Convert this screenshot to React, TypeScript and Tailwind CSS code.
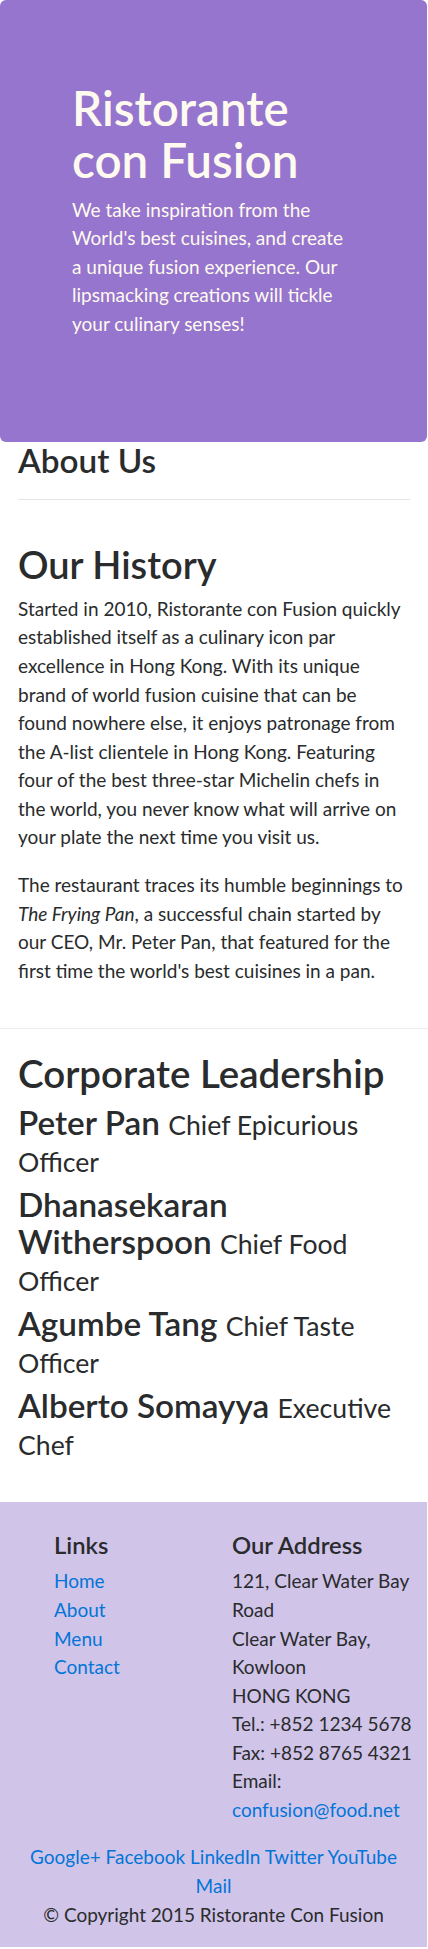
import React from 'react';

interface Leader {
  name: string;
  title: string;
}

const leaders: Leader[] = [
  { name: 'Peter Pan', title: 'Chief Epicurious Officer' },
  { name: 'Dhanasekaran Witherspoon', title: 'Chief Food Officer' },
  { name: 'Agumbe Tang', title: 'Chief Taste Officer' },
  { name: 'Alberto Somayya', title: 'Executive Chef' },
];

const navLinks = ['Home', 'About', 'Menu', 'Contact'];
const socials = ['Google+', 'Facebook', 'LinkedIn', 'Twitter', 'YouTube', 'Mail'];

const App = () => {
  return (
    <div className="w-[428px] bg-white text-[#292b2c] font-['Lato',sans-serif] text-[19px] leading-[28.56px]">
      {/* jumbotron */}
      <header className="w-[427px] h-[442px] rounded-[6px] bg-[#9575cd] px-[72px] pt-[82px]">
        <h1 className="text-[47.6px] leading-[1.1] font-semibold text-[#fffaf0] mb-[9px]">
          Ristorante con Fusion
        </h1>
        <p className="text-[#fffaf0]">
          We take inspiration from the World's best cuisines, and create a unique fusion experience. Our
          lipsmacking creations will tickle your culinary senses!
        </p>
      </header>

      {/* about / history */}
      <section className="px-[18px]">
        <h3 className="text-[33.3px] leading-[1.1] font-semibold">About Us</h3>
        <hr className="mt-[20px] border-0 border-t border-[#e5e5e5]" />
      </section>

      <section className="px-[18px] pt-[44px] pb-[24px] border-b border-[#ececec]">
        <h2 className="text-[38px] leading-[1.1] font-semibold mb-[9.5px]">Our History</h2>
        <p className="mb-[19px]">
          Started in 2010, Ristorante con Fusion quickly established itself as a culinary icon par
          excellence in Hong Kong. With its unique brand of world fusion cuisine that can be found
          nowhere else, it enjoys patronage from the A-list clientele in Hong Kong. Featuring four of
          the best three-star Michelin chefs in the world, you never know what will arrive on your plate
          the next time you visit us.
        </p>
        <p className="mb-[19px]">
          The restaurant traces its humble beginnings to <em>The Frying Pan</em>, a successful chain
          started by our CEO, Mr. Peter Pan, that featured for the first time the world's best cuisines
          in a pan.
        </p>
      </section>

      <section className="px-[18px] pt-[23px] pb-[32px]">
        <h2 className="text-[38.5px] leading-[1.1] font-semibold mb-[9.5px]">Corporate Leadership</h2>
        {leaders.map((leader) => (
          <h3 key={leader.name} className="text-[33.3px] leading-[1.1] font-semibold mb-[9px]">
            {leader.name} <small className="text-[80%] font-normal">{leader.title}</small>
          </h3>
        ))}
      </section>

      {/* footer */}
      <footer className="w-[427px] bg-[#d1c4e9] pt-[30px]">
        <div className="flex">
          <div className="w-[214px] pl-[54px]">
            <h5 className="text-[23.8px] leading-[1.1] font-semibold mb-[9.5px]">Links</h5>
            <ul>
              {navLinks.map((link) => (
                <li key={link}>
                  <a href="#" className="text-[#0275d8]">
                    {link}
                  </a>
                </li>
              ))}
            </ul>
          </div>
          <div className="w-[213px] pl-[18px]">
            <h5 className="text-[23.8px] leading-[1.1] font-semibold mb-[9.5px]">Our Address</h5>
            <address className="not-italic mb-[19px]">
              121, Clear Water Bay Road
              <br />
              Clear Water Bay, Kowloon
              <br />
              HONG KONG
              <br />
              Tel.: +852 1234 5678
              <br />
              Fax: +852 8765 4321
              <br />
              Email:{' '}
              <a href="#" className="text-[#0275d8]">
                confusion@food.net
              </a>
            </address>
          </div>
        </div>
        <div className="px-[18px] text-center">
          {socials.map((s) => (
            <React.Fragment key={s}>
              <a href="#" className="text-[#0275d8]">
                {s}
              </a>{' '}
            </React.Fragment>
          ))}
        </div>
        <p className="text-center pb-[18px]">© Copyright 2015 Ristorante Con Fusion</p>
      </footer>
    </div>
  );
};

export default App;
